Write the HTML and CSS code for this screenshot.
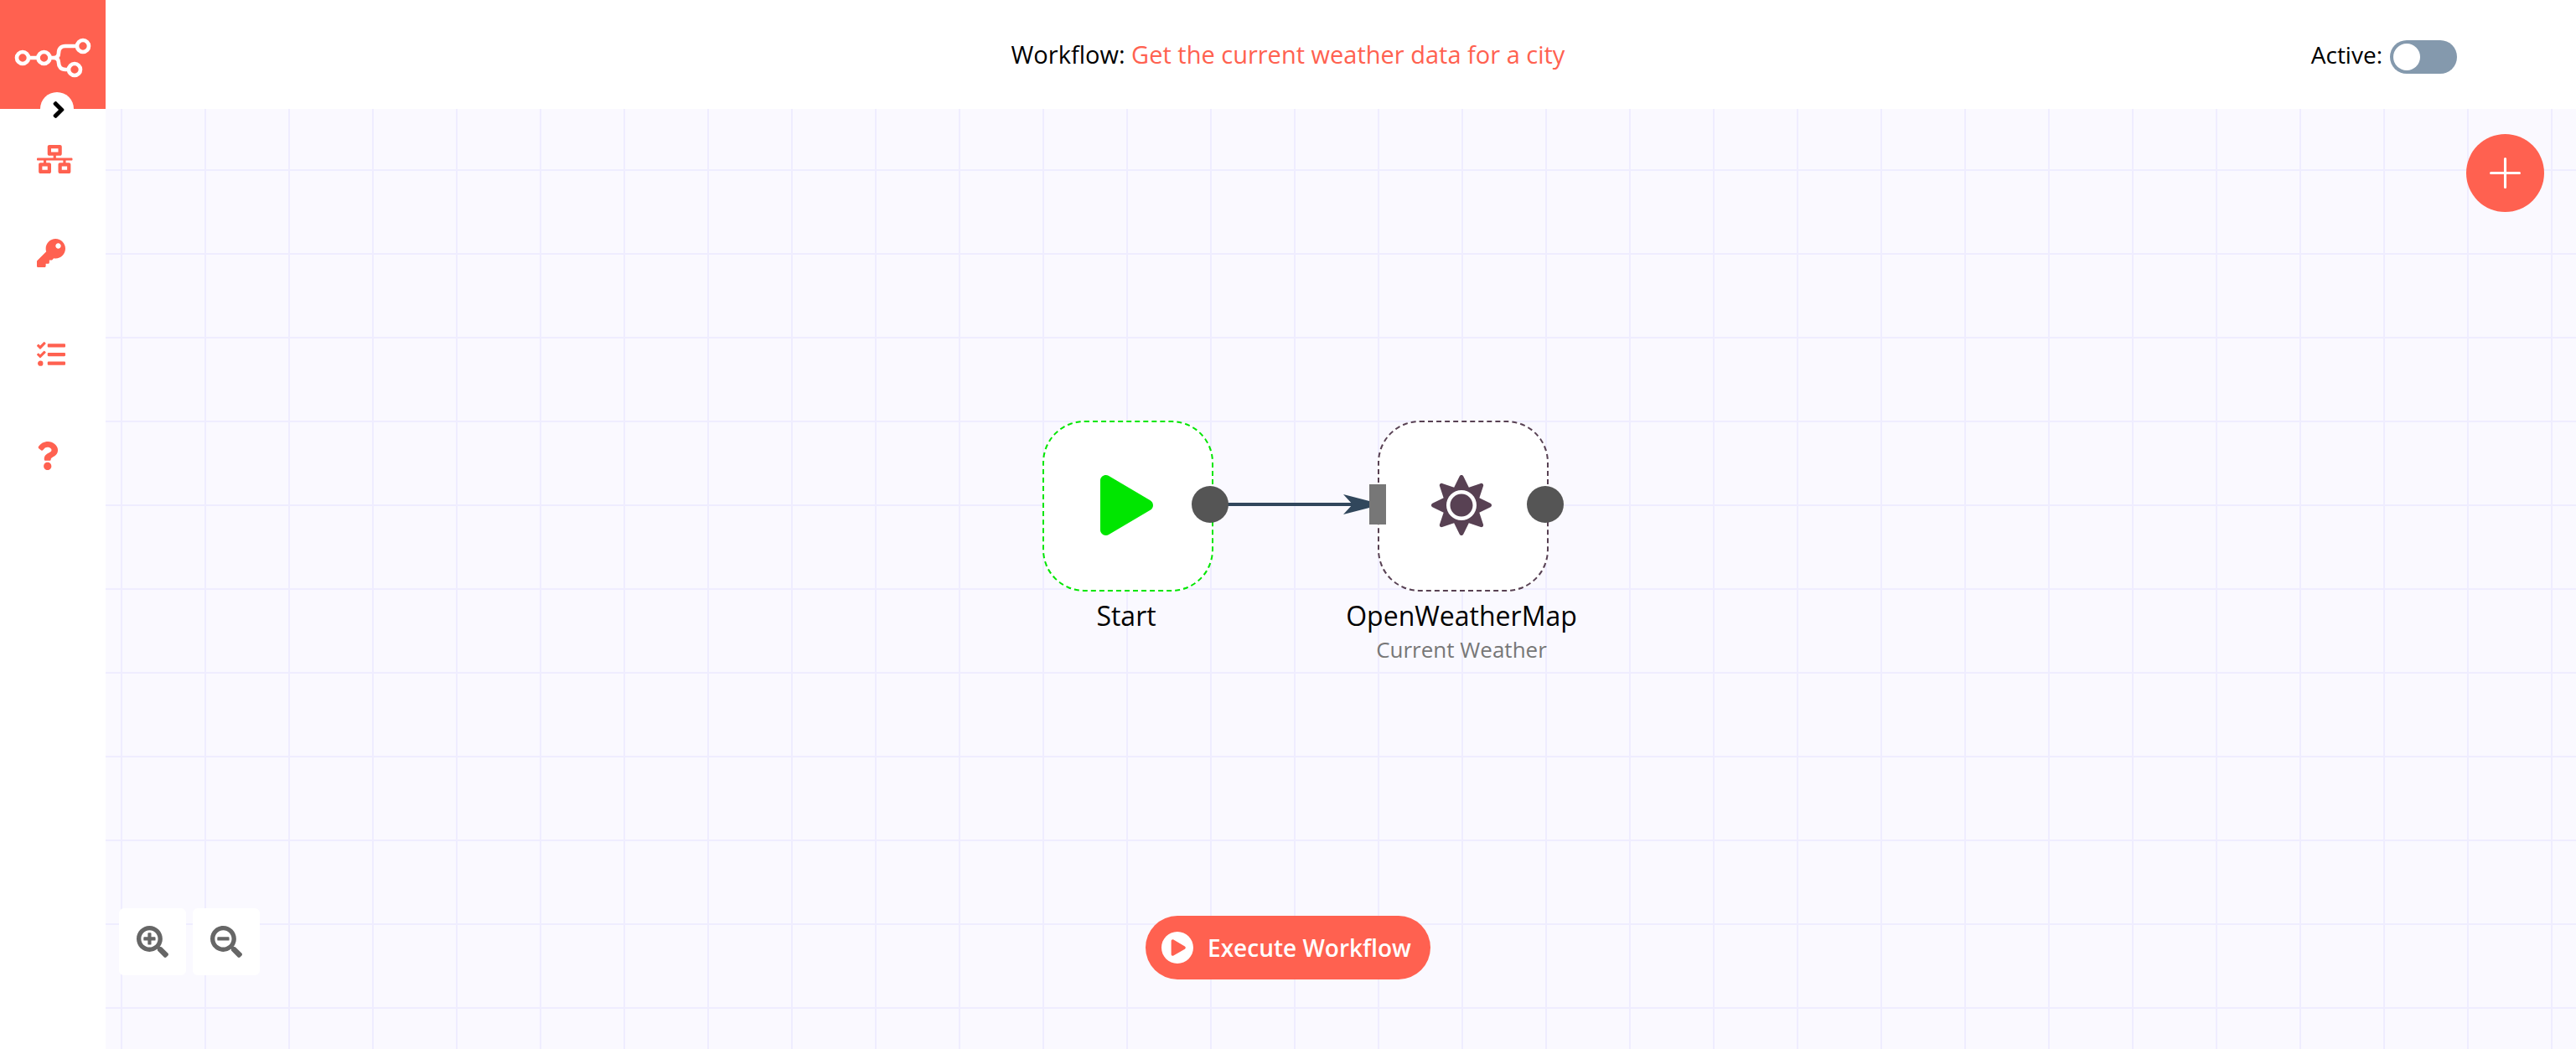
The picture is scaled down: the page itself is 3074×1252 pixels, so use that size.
FILE: index.html
```html
<!DOCTYPE html>
<html lang="en">
<head>
<meta charset="utf-8">
<title>Get the current weather data for a city</title>
<meta name="viewport" content="width=device-width, initial-scale=1">
<link rel="stylesheet" href="styles.css">
</head>
<body>
<header class="header">
  <div class="logo">
    <a href="#" aria-label="Home">
      <svg class="logo-mark" viewBox="0 0 90 46" fill="none" stroke="#fff" stroke-width="4.600">
        <circle cx="9" cy="23" r="7"/><circle cx="34.500" cy="23" r="7"/><circle cx="81" cy="9" r="7"/><circle cx="71" cy="37" r="7"/>
        <path d="M16 23h11M42 23h4c4 0 6-2 6-6 0-5 3-8 8-8h14M46 23c4 0 6 2 6 6 0 5 3 8 8 8h4"/>
      </svg>
    </a>
    <button class="expand" type="button" aria-label="Expand menu">
      <svg viewBox="0 0 256 512"><path d="M224.3 273l-136 136c-9.4 9.4-24.6 9.4-33.9 0l-22.6-22.6c-9.4-9.4-9.4-24.6 0-33.9l96.4-96.4-96.4-96.4c-9.4-9.4-9.4-24.6 0-33.9L54.3 103c9.4-9.4 24.6-9.4 33.9 0l136 136c9.5 9.4 9.5 24.6.1 34z"/></svg>
    </button>
  </div>
  <div class="title">Workflow: <a href="#">Get the current weather data for a city</a></div>
  <div class="active">
    <label for="active">Active:</label>
    <input class="switch" id="active" type="checkbox" role="switch">
  </div>
</header>
<div class="body">
  <nav class="sidebar">
    <a class="item item-first" href="#" aria-label="Workflows"><svg viewBox="0 0 640 512"><path d="M640 264v-16c0-8.84-7.16-16-16-16H344v-40h72c17.67 0 32-14.33 32-32V32c0-17.67-14.33-32-32-32H224c-17.67 0-32 14.33-32 32v128c0 17.67 14.33 32 32 32h72v40H16c-8.84 0-16 7.16-16 16v16c0 8.84 7.16 16 16 16h104v40H64c-17.67 0-32 14.33-32 32v128c0 17.67 14.33 32 32 32h160c17.67 0 32-14.33 32-32V352c0-17.67-14.33-32-32-32h-56v-40h304v40h-56c-17.67 0-32 14.33-32 32v128c0 17.67 14.33 32 32 32h160c17.67 0 32-14.33 32-32V352c0-17.67-14.33-32-32-32h-56v-40h104c8.84 0 16-7.16 16-16zM256 128V64h128v64H256zm-64 320H96v-64h96v64zm352 0h-96v-64h96v64z"/></svg></a>
    <a class="item" href="#" aria-label="Credentials"><svg viewBox="0 0 512 512"><path d="M512 176.001C512 273.203 433.202 352 336 352c-11.22 0-22.19-1.062-32.827-3.069l-24.012 27.014A23.999 23.999 0 0 1 261.223 384H224v40c0 13.255-10.745 24-24 24h-40v40c0 13.255-10.745 24-24 24H24c-13.255 0-24-10.745-24-24v-78.059c0-6.365 2.529-12.47 7.029-16.971l161.802-161.802C163.108 213.814 160 195.271 160 176 160 78.798 238.797.001 335.999 0 433.488-.001 512 78.511 512 176.001zM336 128c0 26.51 21.49 48 48 48s48-21.49 48-48-21.49-48-48-48-48 21.49-48 48z"/></svg></a>
    <a class="item" href="#" aria-label="Executions"><svg viewBox="0 0 512 512"><path d="M139.61 35.5a12 12 0 0 0-17 0L58.93 98.81l-22.7-22.12a12 12 0 0 0-17 0L3.53 92.41a12 12 0 0 0 0 17l47.59 47.4a12.78 12.78 0 0 0 17.61 0l15.59-15.62L156.52 69a12.09 12.09 0 0 0 .09-17zm0 159.19a12 12 0 0 0-17 0l-63.68 63.72-22.7-22.1a12 12 0 0 0-17 0L3.53 252a12 12 0 0 0 0 17L51 316.5a12.77 12.77 0 0 0 17.6 0l15.7-15.69 72.2-72.22a12 12 0 0 0 .09-16.9zM64 368c-26.49 0-48.59 21.5-48.59 48S37.53 464 64 464a48 48 0 0 0 0-96zm432 16H208a16 16 0 0 0-16 16v32a16 16 0 0 0 16 16h288a16 16 0 0 0 16-16v-32a16 16 0 0 0-16-16zm0-320H208a16 16 0 0 0-16 16v32a16 16 0 0 0 16 16h288a16 16 0 0 0 16-16V80a16 16 0 0 0-16-16zm0 160H208a16 16 0 0 0-16 16v32a16 16 0 0 0 16 16h288a16 16 0 0 0 16-16v-32a16 16 0 0 0-16-16z"/></svg></a>
    <a class="item" href="#" aria-label="Help"><svg viewBox="0 0 384 512"><path d="M202.021 0C122.202 0 70.503 32.703 29.914 91.026c-7.363 10.58-5.093 25.086 5.178 32.874l43.138 32.709c10.373 7.865 25.132 6.026 33.253-4.148 25.049-31.381 43.63-49.449 82.757-49.449 30.764 0 68.816 19.799 68.816 49.631 0 22.552-18.617 34.134-48.993 51.164-35.423 19.86-82.299 44.576-82.299 106.405V320c0 13.255 10.745 24 24 24h72.471c13.255 0 24-10.745 24-24v-5.773c0-42.86 125.268-44.645 125.268-160.627C377.504 66.256 286.902 0 202.021 0zM192 373.459c-38.196 0-69.271 31.075-69.271 69.271 0 38.195 31.075 69.27 69.271 69.27s69.271-31.075 69.271-69.271-31.075-69.27-69.271-69.27z"/></svg></a>
  </nav>
  <main class="canvas">
    <svg class="connection" viewBox="0 0 190 24"><path d="M0 10h175v4H0z" fill="#31475c"/><path d="M159 0l46 12-46 12 11-12z" fill="#31475c"/></svg>
    <section class="node node-start">
      <div class="box">
        <svg viewBox="0 0 448 512"><path d="M424.4 214.7L72.4 6.6C43.8-10.3 0 6.1 0 47.9V464c0 37.5 40.7 60.1 72.4 41.3l352-208c31.4-18.5 31.5-64.1 0-82.6z"/></svg>
        <span class="output"></span>
      </div>
      <div class="name">Start</div>
    </section>
    <section class="node node-weather">
      <div class="box">
        <svg viewBox="0 0 512 512"><path d="M256 160c-52.9 0-96 43.1-96 96s43.1 96 96 96 96-43.1 96-96-43.1-96-96-96zm246.4 80.5l-94.7-47.3 33.5-100.4c4.5-13.6-8.4-26.5-21.9-21.9l-100.4 33.5-47.4-94.8c-6.4-12.8-24.6-12.8-31 0l-47.3 94.7L92.7 70.8c-13.6-4.5-26.5 8.4-21.9 21.9l33.5 100.4-94.7 47.4c-12.8 6.4-12.8 24.6 0 31l94.7 47.3-33.5 100.5c-4.5 13.6 8.4 26.5 21.9 21.9l100.4-33.5 47.3 94.7c6.4 12.8 24.6 12.8 31 0l47.3-94.7 100.4 33.5c13.6 4.5 26.5-8.4 21.9-21.9l-33.5-100.4 94.7-47.3c13-6.5 13-24.7.2-31.1zm-155.9 106c-49.9 49.9-131.1 49.9-181 0-49.9-49.9-49.9-131.1 0-181 49.9-49.9 131.1-49.9 181 0 49.9 49.9 49.9 131.1 0 181z"/></svg>
        <span class="input"></span>
        <span class="output"></span>
      </div>
      <div class="name">OpenWeatherMap</div>
      <div class="operation">Current Weather</div>
    </section>
    <button class="add" type="button" aria-label="Add node">
      <svg viewBox="0 0 36 36" stroke="#fff" stroke-width="3" stroke-linecap="round"><path d="M18 1.500v33M1.500 18h33"/></svg>
    </button>
    <div class="zoom">
      <button type="button" aria-label="Zoom in"><svg viewBox="0 0 512 512"><path d="M304 192v32c0 6.600-5.400 12-12 12h-56v56c0 6.600-5.400 12-12 12h-32c-6.600 0-12-5.400-12-12v-56h-56c-6.600 0-12-5.400-12-12v-32c0-6.600 5.400-12 12-12h56v-56c0-6.600 5.400-12 12-12h32c6.600 0 12 5.400 12 12v56h56c6.600 0 12 5.400 12 12zm201 284.700L476.700 505c-9.400 9.400-24.600 9.400-33.900 0L343 405.300c-4.500-4.500-7-10.600-7-17V372c-35.300 27.600-79.700 44-128 44C93.100 416 0 322.900 0 208S93.100 0 208 0s208 93.100 208 208c0 48.300-16.400 92.700-44 128h16.300c6.400 0 12.500 2.500 17 7l99.700 99.700c9.300 9.400 9.300 24.600 0 34zM344 208c0-75.200-60.800-136-136-136S72 132.800 72 208s60.800 136 136 136 136-60.800 136-136z"/></svg></button>
      <button type="button" aria-label="Zoom out"><svg viewBox="0 0 512 512"><path d="M304 192v32c0 6.600-5.400 12-12 12H124c-6.600 0-12-5.400-12-12v-32c0-6.600 5.400-12 12-12h168c6.600 0 12 5.400 12 12zm201 284.700L476.700 505c-9.400 9.400-24.600 9.400-33.900 0L343 405.300c-4.500-4.500-7-10.600-7-17V372c-35.300 27.600-79.700 44-128 44C93.100 416 0 322.900 0 208S93.100 0 208 0s208 93.100 208 208c0 48.300-16.400 92.700-44 128h16.300c6.400 0 12.500 2.500 17 7l99.700 99.700c9.300 9.400 9.300 24.600 0 34zM344 208c0-75.200-60.800-136-136-136S72 132.800 72 208s60.800 136 136 136 136-60.800 136-136z"/></svg></button>
    </div>
  </main>
</div>
<button class="execute" type="button">
  <svg viewBox="8 8 496 496"><path d="M256 8C119 8 8 119 8 256s111 248 248 248 248-111 248-248S393 8 256 8zm115.700 272l-176 101c-15.800 8.800-35.700-2.500-35.700-21V152c0-18.400 19.800-29.800 35.700-21l176 107c16.400 9.200 16.400 32.900 0 42z"/></svg>
  <span>Execute Workflow</span>
</button>
</body>
</html>
```

FILE: styles.css
```css
* { box-sizing: border-box; }

body {
  margin: 0;
  min-height: 100vh;
  display: flex;
  flex-direction: column;
  font-family: "Open Sans", "Noto Sans", sans-serif;
  font-size: 28px;
  line-height: 36px;
  color: #000;
  background: #fff;
}

a { color: #ff6150; text-decoration: none; }
svg { display: block; fill: currentColor; }
button { border: 0; padding: 0; font: inherit; cursor: pointer; }

.header {
  display: grid;
  grid-template-columns: 1fr auto 1fr;
  align-items: center;
  height: 130px;
}

.logo {
  position: relative;
  width: 126px;
  height: 130px;
  padding: 46px 18px;
  background: #ff6150;
}
.logo-mark { width: 90px; height: 46px; fill: none; overflow: visible; }

.expand {
  position: absolute;
  left: 48px;
  bottom: -20px;
  width: 40px;
  height: 40px;
  padding: 2px 0 0 4px;
  display: grid;
  place-items: center;
  border-radius: 50%;
  background: #fff;
  color: #000;
}
.expand svg { height: 32px; }

.title { font-size: 29px; }

.active {
  display: flex;
  justify-content: flex-end;
  align-items: center;
  gap: 9px;
  padding-right: 142px;
}

.switch {
  appearance: none;
  width: 80px;
  height: 40px;
  margin: 6px 0 0;
  padding: 4px;
  border-radius: 20px;
  background: #8499ad;
}
.switch::before {
  content: "";
  display: block;
  width: 32px;
  height: 32px;
  border-radius: 50%;
  background: #fff;
}
.switch:checked { background: #13ce66; }
.switch:checked::before { margin-left: 40px; }

.body { flex: 1; display: flex; }

.sidebar {
  width: 126px;
  padding: 43px 0 0 44px;
  display: flex;
  flex-direction: column;
}
.item { height: 121px; }
.item-first { height: 112px; }
.item svg { height: 34px; }

.canvas {
  position: relative;
  flex: 1;
  overflow: hidden;
  background-color: #faf9ff;
  background-image:
    linear-gradient(to right, #efedff 2px, transparent 2px),
    linear-gradient(to bottom, #efedff 2px, transparent 2px);
  background-size: 100px 100px;
  background-position: 18px 72px;
}

.node {
  position: absolute;
  top: 372px;
  width: 300px;
  display: flex;
  flex-direction: column;
  align-items: center;
}
.node-start { left: 1070px; color: #00e600; }
.node-weather { left: 1470px; color: #584153; }

.box {
  position: relative;
  width: 204px;
  height: 204px;
  padding: 0 4px 2px 0;
  display: grid;
  place-items: center;
  border: 2px dashed;
  border-radius: 50px;
  background: #fff;
}
.box svg { height: 72px; }

.output, .input { position: absolute; }
.output {
  right: -20px;
  top: 76px;
  width: 44px;
  height: 44px;
  border-radius: 50%;
  background: #555;
}
.input {
  left: -12px;
  top: 74px;
  width: 20px;
  height: 48px;
  background: #777;
}

.name, .operation { padding-right: 4px; }
.name { margin-top: 7px; font-size: 32px; line-height: 44px; color: #000; }
.operation { font-size: 26px; line-height: 36px; color: #777; }

.connection {
  position: absolute;
  left: 1318px;
  top: 460px;
  width: 190px;
  height: 24px;
}

.add {
  position: absolute;
  top: 30px;
  right: 38px;
  width: 93px;
  height: 93px;
  display: grid;
  place-items: center;
  border-radius: 50%;
  background: #ff6150;
}
.add svg { width: 37px; }

.zoom {
  position: absolute;
  left: 16px;
  bottom: 88px;
  display: flex;
  gap: 8px;
}
.zoom button {
  width: 80px;
  height: 80px;
  display: grid;
  place-items: center;
  border-radius: 6px;
  background: #fff;
  color: #666;
}
.zoom svg { width: 38px; }

.execute {
  position: fixed;
  left: 0;
  right: 0;
  bottom: 83px;
  width: fit-content;
  height: 76px;
  margin: 0 auto;
  padding: 0 23px 0 19px;
  display: flex;
  align-items: center;
  gap: 17px;
  border-radius: 38px;
  background: #ff6150;
  color: #fff;
  font-weight: 600;
}
.execute svg { width: 38px; }
```
